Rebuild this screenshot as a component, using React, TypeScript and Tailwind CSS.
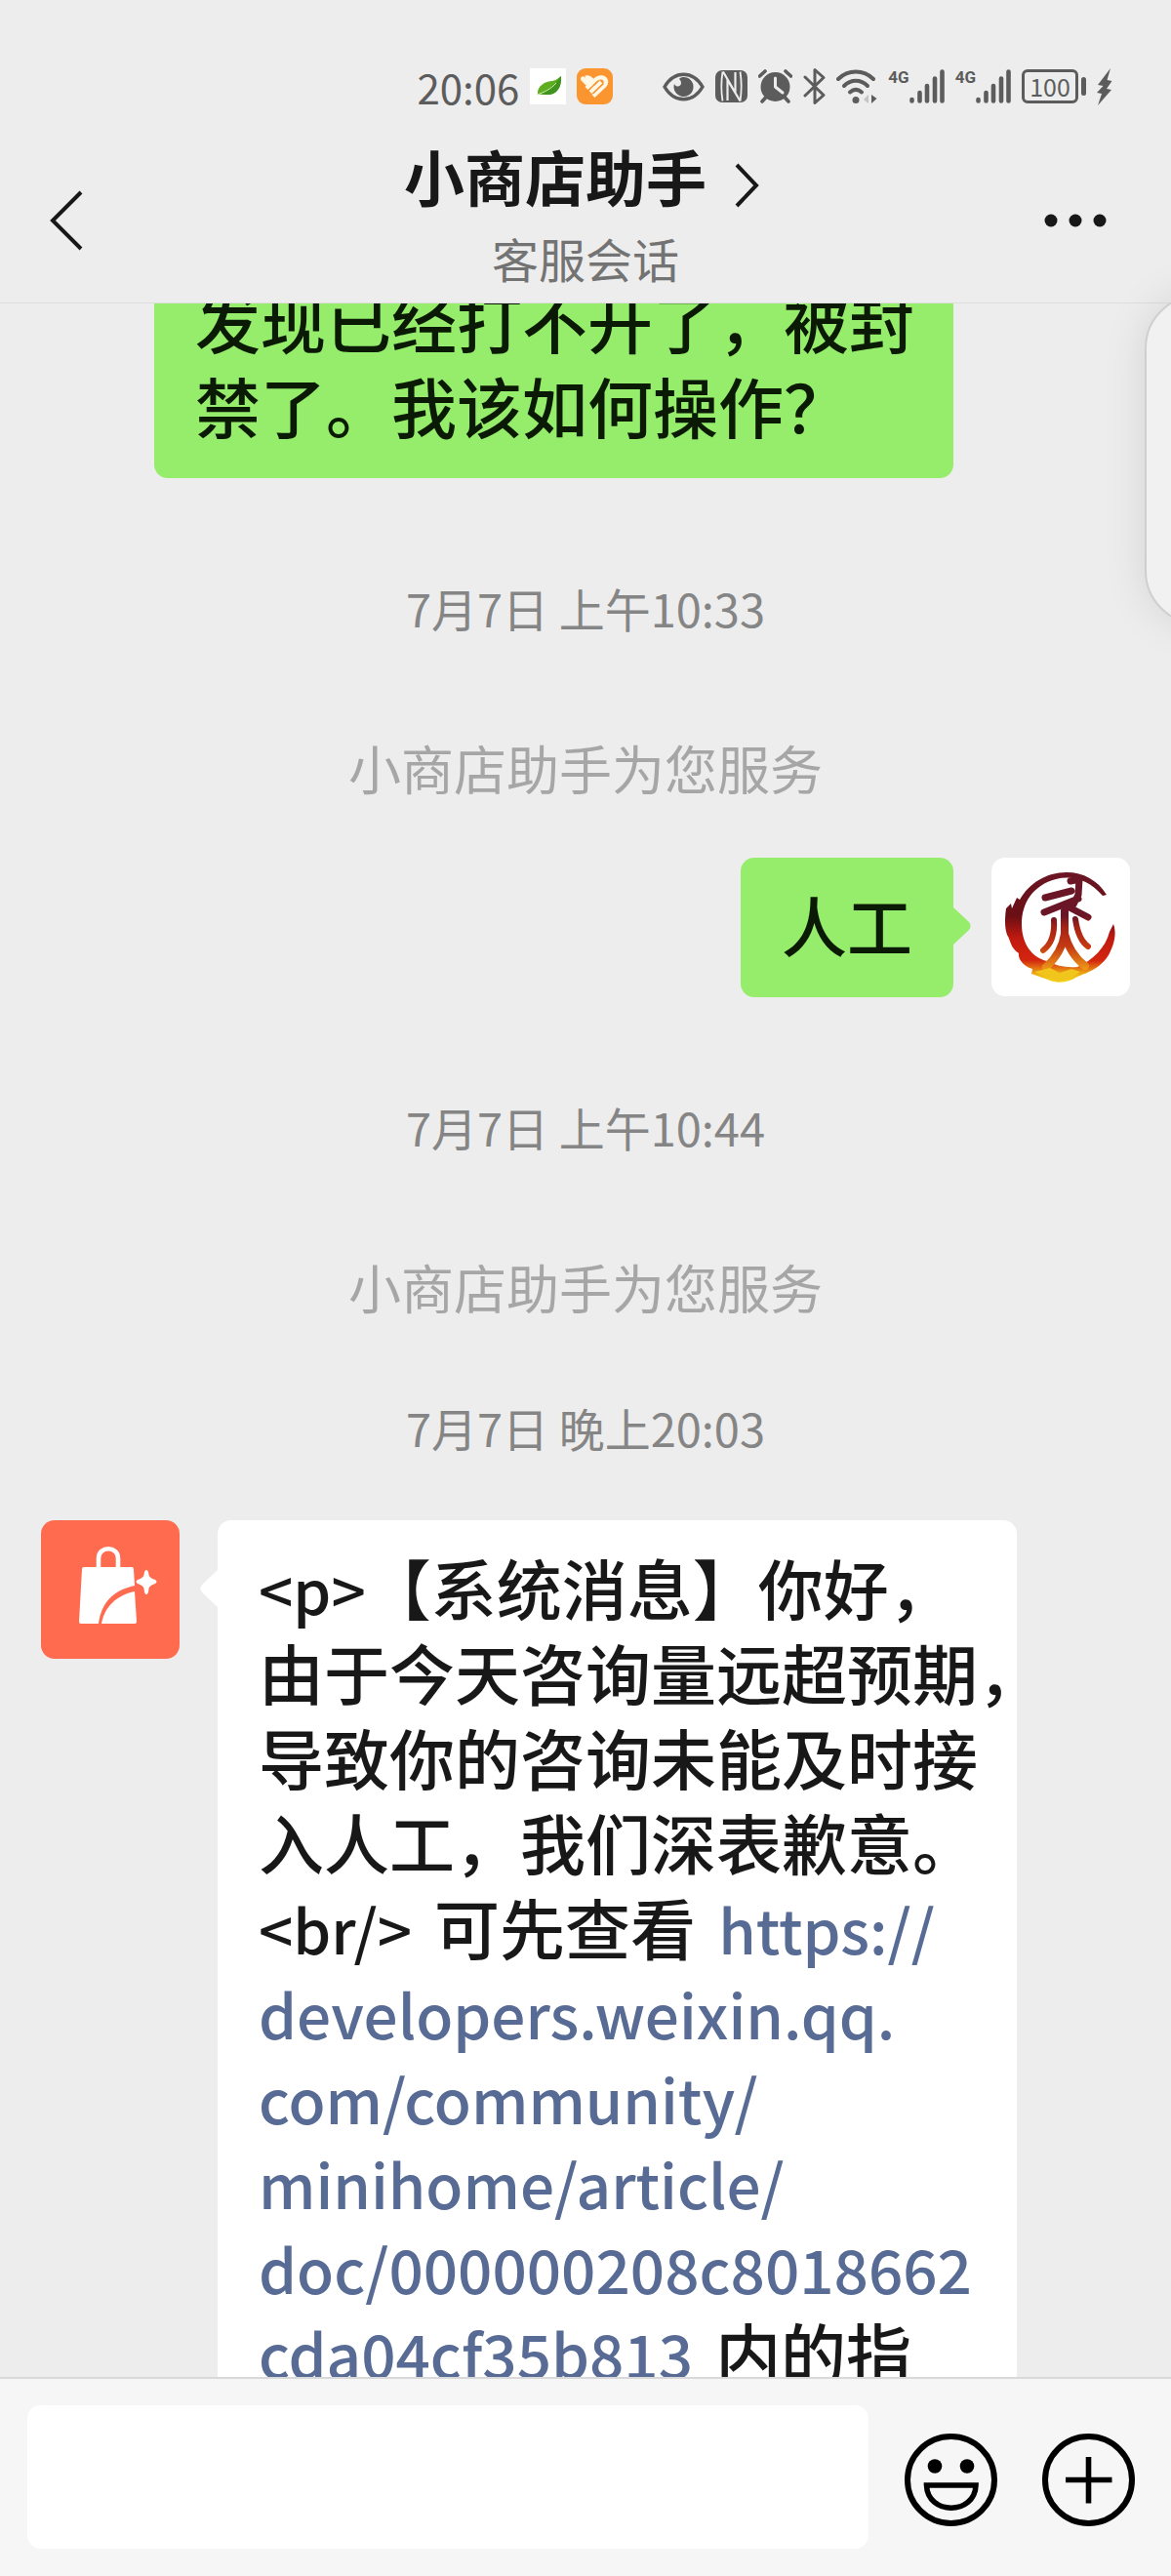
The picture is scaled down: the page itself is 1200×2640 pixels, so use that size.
import React from "react";

function StatusBar() {
  return (
    <div className="flex h-[142px] items-center justify-end gap-[11px] pt-[35px] pr-[60px] text-[#5c5c5c]">
      <time className="text-[42px] leading-none">20:06</time>
      <svg className="size-[37px]" viewBox="0 0 37 37" aria-hidden="true">
        <rect width="37" height="37" fill="#fff" />
        <path d="M8 27C7 18 16 13 23 13C28 12 30 9 32 8C33 21 26 28 17 27C13 27 10 26 8 27Z" fill="#5fae22" />
        <path d="M8 27C15 25 24 19 32 8C33 21 26 28 17 27C13 27 10 26 8 27Z" fill="#3f9420" />
        <path d="M7 27C14 25 22 21 27 15" stroke="#d3efad" strokeWidth="1" fill="none" />
      </svg>
      <svg className="size-[37px]" viewBox="0 0 37 37" aria-hidden="true">
        <rect width="37" height="37" rx="9" fill="#fb9530" />
        <g stroke="#fff8e6" strokeWidth="5" fill="none">
          <path d="M6.500 11L14 18.500" strokeLinecap="round" />
          <path d="M8.500 12L19 22M9 10C12 9 14 11 17 14" />
          <path d="M10 20.500L19.500 11.500C23 8 29 9 30 13C30.500 16 29 17 27 19L17 28.500" strokeWidth="4.400" />
          <path d="M14 24.500L25 14" strokeWidth="4" />
        </g>
        <path d="M11.500 23L22 13M16.500 26L27.500 15.500" stroke="#fb9530" strokeWidth="1.600" />
      </svg>
      <svg className="ml-[40px] h-[30px] w-[43px]" viewBox="0 0 43 30" aria-hidden="true">
        <path d="M2 15C12-2 31-2 41 15C31 32 12 32 2 15Z" fill="none" stroke="currentColor" strokeWidth="3.400" />
        <path d="M21.500 5A10 10 0 1 1 12 12C14 16 19 15 19 11C19 9 18 8 17 7C18 5.500 20 5 21.500 5Z" fill="currentColor" />
      </svg>
      <svg className="size-[33px]" viewBox="0 0 33 33" aria-hidden="true">
        <rect width="33" height="33" rx="7" fill="currentColor" />
        <path d="M7.500 1.500C6 11 6 22 7.500 31.500M25.500 1.500C27 11 27 22 25.500 31.500" stroke="#ededed" strokeWidth="1.800" fill="none" />
        <path d="M12.500 31V10L25.500 31.500M8 1.500L20.500 23V2" stroke="#ededed" strokeWidth="2.200" fill="none" />
      </svg>
      <svg className="size-[35px]" viewBox="0 0 35 35" aria-hidden="true">
        <circle cx="17.500" cy="18" r="15" fill="currentColor" />
        <path d="M1.500 7L7 2M33.500 7L28 2M4 33L8 28.500M31 33L27 28.500" stroke="currentColor" strokeWidth="3.600" strokeLinecap="round" />
        <path d="M17.500 9V18L25 24" fill="none" stroke="#ededed" strokeWidth="3" strokeLinecap="round" strokeLinejoin="round" />
      </svg>
      <svg className="h-[37px] w-[23px]" viewBox="0 0 23 37" aria-hidden="true">
        <path d="M2 9L21 27.500L12 35.500V1.500L21 9.500L2 28" fill="none" stroke="currentColor" strokeWidth="3" strokeLinecap="round" strokeLinejoin="round" />
      </svg>
      <svg className="h-[36px] w-[42px]" viewBox="0 0 42 36" aria-hidden="true">
        <g fill="none" stroke="currentColor" strokeWidth="4" strokeLinecap="round">
          <path d="M2 10C12 0 28 0 38 10" />
          <path d="M8 17C15 10 25 10 32 17" />
          <path d="M14 23.500C18 20 22 20 26 23.500" />
        </g>
        <circle cx="20" cy="31.500" r="3.500" fill="currentColor" />
        <path d="M33 26V35L28 31Z" fill="#c4c4c4" />
        <path d="M36 26V35L41.500 30Z" fill="currentColor" />
      </svg>
      <Signal />
      <Signal />
      <div className="flex items-center gap-[3px]">
        <div className="flex h-[35px] w-[58px] items-center justify-center rounded-md border-3 border-current text-[25px] leading-none">100</div>
        <div className="h-[19px] w-[5px] rounded-sm bg-current" />
      </div>
      <svg className="h-[38px] w-[16px]" viewBox="0 0 16 38" aria-hidden="true">
        <path d="M14 0L1 17L6.500 18L0 25L5 26L1 38L15 22L10 21L15.500 13L10.500 12Z" fill="currentColor" />
      </svg>
    </div>
  );
}

function Signal() {
  return (
    <div className="flex items-start">
      <span className="font-[Roboto,sans-serif] text-[17px] leading-none font-bold">4G</span>
      <svg className="h-[35px] w-[36px]" viewBox="0 0 36 35" aria-hidden="true">
        <path d="M2.500 31V32.500M10.500 24V32.500M18 17V32.500M26 9.500V32.500M33.500 2.500V32.500" stroke="currentColor" strokeWidth="4.600" strokeLinecap="round" />
      </svg>
    </div>
  );
}

function NavBar() {
  return (
    <div className="grid h-[168px] grid-cols-[1fr_auto_1fr] items-center text-[#181818]">
      <button type="button" aria-label="返回" className="ml-[50px] justify-self-start">
        <svg className="h-[62px] w-[36px]" viewBox="0 0 36 62" aria-hidden="true">
          <path d="M33 2L4 31L33 60" fill="none" stroke="currentColor" strokeWidth="4" />
        </svg>
      </button>
      <div className="flex flex-col items-center">
        <button type="button" className="mr-2 flex items-center gap-[28px]">
          <h1 className="text-[62px] leading-[76px] font-bold">小商店助手</h1>
          <svg className="mt-5 h-[46px] w-[26px]" viewBox="0 0 26 46" aria-hidden="true">
            <path d="M3 2L23 23L3 44" fill="none" stroke="currentColor" strokeWidth="4" />
          </svg>
        </button>
        <p className="text-[48px] leading-[92px] text-[#737373]">客服会话</p>
      </div>
      <button type="button" aria-label="更多" className="mr-[66px] justify-self-end">
        <svg className="h-[14px] w-[64px]" viewBox="0 0 64 14" aria-hidden="true" fill="currentColor">
          <circle cx="7" cy="7" r="6.500" />
          <circle cx="32" cy="7" r="6.500" />
          <circle cx="57" cy="7" r="6.500" />
        </svg>
      </button>
    </div>
  );
}

function Time({ children }: { children: React.ReactNode }) {
  return <time className="block text-center text-[47px] leading-[64px] text-[#858585]">{children}</time>;
}

function Notice() {
  return <p className="text-center text-[54px] leading-[64px] text-[#a6a6a6]">小商店助手为您服务</p>;
}

function UserAvatar() {
  return (
    <svg className="size-[142px] shrink-0 rounded-[14px] bg-white" viewBox="0 0 142 142" role="img" aria-label="头像">
      <defs>
        <linearGradient id="fire" x1="0" y1="14" x2="0" y2="128" gradientUnits="userSpaceOnUse">
          <stop offset="0" stopColor="#6b1626" />
          <stop offset="0.400" stopColor="#6a0f14" />
          <stop offset="0.600" stopColor="#c01a10" />
          <stop offset="0.800" stopColor="#d3260f" />
          <stop offset="0.930" stopColor="#f0b414" />
          <stop offset="1" stopColor="#f6dc20" />
        </linearGradient>
        <linearGradient id="flame" x1="0" y1="20" x2="0" y2="115" gradientUnits="userSpaceOnUse">
          <stop offset="0" stopColor="#6b1626" />
          <stop offset="0.420" stopColor="#6b1626" />
          <stop offset="0.550" stopColor="#a82414" />
          <stop offset="0.750" stopColor="#c43a12" />
          <stop offset="1" stopColor="#ee9a18" />
        </linearGradient>
      </defs>
      <path
        d="M118 38L114 39C99 22 82 18 66 22C43 28 31 46 31 68C31 88 41 102 57 106C67 111 77 113 88 112C104 105 117 92 121 76L125 68C128 76 127 86 121 98C113 113 98 118 88 122C78 129 66 129 58 125L41 119L42 114C32 111 27 103 28 98C19 92 20 85 16 79C13 70 14 60 15 52L20 47L21 52L26 41L29 43C39 26 56 15 77 15C94 15 109 23 118 38Z"
        fill="url(#fire)"
      />
      <g fill="none" stroke="url(#flame)" strokeLinecap="round" strokeLinejoin="round">
        <path d="M55 41L82 34M81 24L90 22L89 38L84 48M54 56L89 42M78 50L99 61" strokeWidth="7" />
        <path d="M64 64C65 78 62 88 53 95M86 63C88 77 92 86 99 91" strokeWidth="6" />
        <path d="M75 54V78C73 92 66 103 56 112M75 78C79 94 87 104 96 111" strokeWidth="8" />
      </g>
      <path d="M44 117L60 113L70 118L82 114L91 117L79 125L68 127Z" fill="#f0c51c" />
    </svg>
  );
}

function ShopAvatar() {
  return (
    <svg className="size-[142px] shrink-0 rounded-[14px] bg-[#ff6b4f]" viewBox="0 0 142 142" role="img" aria-label="小商店助手">
      <path d="M59 49V39C59 26 79 26 79 39V49" fill="none" stroke="#fff" strokeWidth="4.600" />
      <path d="M44 48H93Q95 48 95 50L96 67C74 72 62 84 59 106H41Q39 106 39 104L42 50Q42 48 44 48Z" fill="#fff" />
      <path d="M96 73L98 104Q98 106 96 106H62C65 89 77 77 96 73Z" fill="#fff" />
      <path d="M108 51Q110 51 110.500 56Q111 59 117 61Q120 63 117 65Q111 67 110.500 70Q110 76 108 76Q106 76 105.500 70Q105 67 99 65Q96 63 99 61Q105 59 105.500 56Q106 51 108 51Z" fill="#fff" />
    </svg>
  );
}

function Bubble({ tail, wide, children }: { tail?: "left" | "right"; wide?: boolean; children: React.ReactNode }) {
  const mine = tail !== "left";
  return (
    <div
      className={
        "relative rounded-[14px] px-[42px] pt-[24px] pb-[32px] text-[67px] leading-[87px] font-medium whitespace-nowrap " +
        (mine ? "bg-[#95ed6b] text-[#0b1a05] " : "bg-white text-[#181818] ") +
        (wide ? "w-[819px]" : "")
      }
    >
      {tail === "right" && (
        <svg className="absolute top-[50px] left-full h-[40px] w-[18px]" viewBox="0 0 18 40" aria-hidden="true">
          <path d="M-1 0L16 16Q19 20 16 24L-1 40Z" fill="#95ed6b" />
        </svg>
      )}
      {tail === "left" && (
        <svg className="absolute top-[50px] right-full h-[40px] w-[18px]" viewBox="0 0 18 40" aria-hidden="true">
          <path d="M19 0L2 16Q-1 20 2 24L19 40Z" fill="#fff" />
        </svg>
      )}
      <p>{children}</p>
    </div>
  );
}

function InputBar() {
  return (
    <footer className="flex shrink-0 items-center border-t-2 border-[#d9d9d9] bg-[#f6f6f6] pt-[27px] pr-[37px] pb-[28px] pl-[28px]">
      <input type="text" aria-label="输入消息" className="h-[147px] min-w-0 flex-1 rounded-[14px] bg-white px-6 text-[60px] outline-none" />
      <div className="ml-[37px] flex gap-[46px] pt-[6px]">
        <button type="button" aria-label="表情">
          <svg className="size-[95px]" viewBox="0 0 95 95" aria-hidden="true">
            <circle cx="47.500" cy="47.500" r="44.500" fill="none" stroke="#000" strokeWidth="6" />
            <circle cx="31" cy="33.500" r="7.300" />
            <circle cx="64" cy="33.500" r="7.300" />
            <path d="M22.500 53H73C72 84 23.500 84 22.500 53Z" fill="none" stroke="#000" strokeWidth="5.600" />
          </svg>
        </button>
        <button type="button" aria-label="更多功能">
          <svg className="size-[95px]" viewBox="0 0 95 95" aria-hidden="true">
            <circle cx="47.500" cy="47.500" r="44.500" fill="none" stroke="#000" strokeWidth="6" />
            <path d="M47.500 24V71.500M24 47.500H71.500" stroke="#000" strokeWidth="5.600" />
          </svg>
        </button>
      </div>
    </footer>
  );
}

export default function App() {
  return (
    <div className="relative flex h-screen flex-col overflow-hidden bg-[#ededed] font-['Noto_Sans_CJK_SC',sans-serif]">
      <header className="shrink-0 border-b border-[#dedede]">
        <StatusBar />
        <NavBar />
      </header>

      <main className="min-h-0 flex-1 overflow-hidden px-[42px]">
        <div className="-mt-[51px] flex justify-end pr-[181px]">
          <Bubble wide>
            发现已经打不开了，被封
            <br />
            禁了。我该如何操作？
          </Bubble>
        </div>
        <div className="mt-[101px] space-y-[100px]">
          <Time>7月7日 上午10:33</Time>
          <Notice />
        </div>
        <div className="mt-[60px] flex justify-end gap-[39px]">
          <Bubble tail="right">人工</Bubble>
          <UserAvatar />
        </div>
        <div className="mt-[101px] space-y-[100px]">
          <Time>7月7日 上午10:44</Time>
          <Notice />
        </div>
        <div className="mt-[80px]">
          <Time>7月7日 晚上20:03</Time>
        </div>
        <div className="mt-[63px] flex items-start gap-[39px]">
          <ShopAvatar />
          <Bubble tail="left" wide>
            <span className="text-[62px] leading-none">&lt;p&gt;</span>【系统消息】你好，
            <br />
            由于今天咨询量远超预期，
            <br />
            导致你的咨询未能及时接
            <br />
            入人工，我们深表歉意。
            <br />
            <span className="mr-2 text-[62px] leading-none">&lt;br/&gt;</span> 可先查看{" "}
            <a
              href="https://developers.weixin.qq.com/community/minihome/article/doc/000000208c8018662cda04cf35b813"
              className="mx-2 text-[62px] leading-none text-[#576b95]"
            >
              https://
              <br />
              developers.weixin.qq.
              <br />
              com/community/
              <br />
              minihome/article/
              <br />
              doc/000000208c8018662
              <br />
              cda04cf35b813
            </a>{" "}
            内的指
          </Bubble>
        </div>
      </main>

      <InputBar />

      <aside aria-hidden="true" className="absolute top-[302px] -right-[93px] h-[338px] w-[120px] rounded-[55px] border-2 border-[#cfcfcf] bg-[#f1f1f1] shadow-[0_0_45px_rgba(0,0,0,0.1)]" />
    </div>
  );
}
